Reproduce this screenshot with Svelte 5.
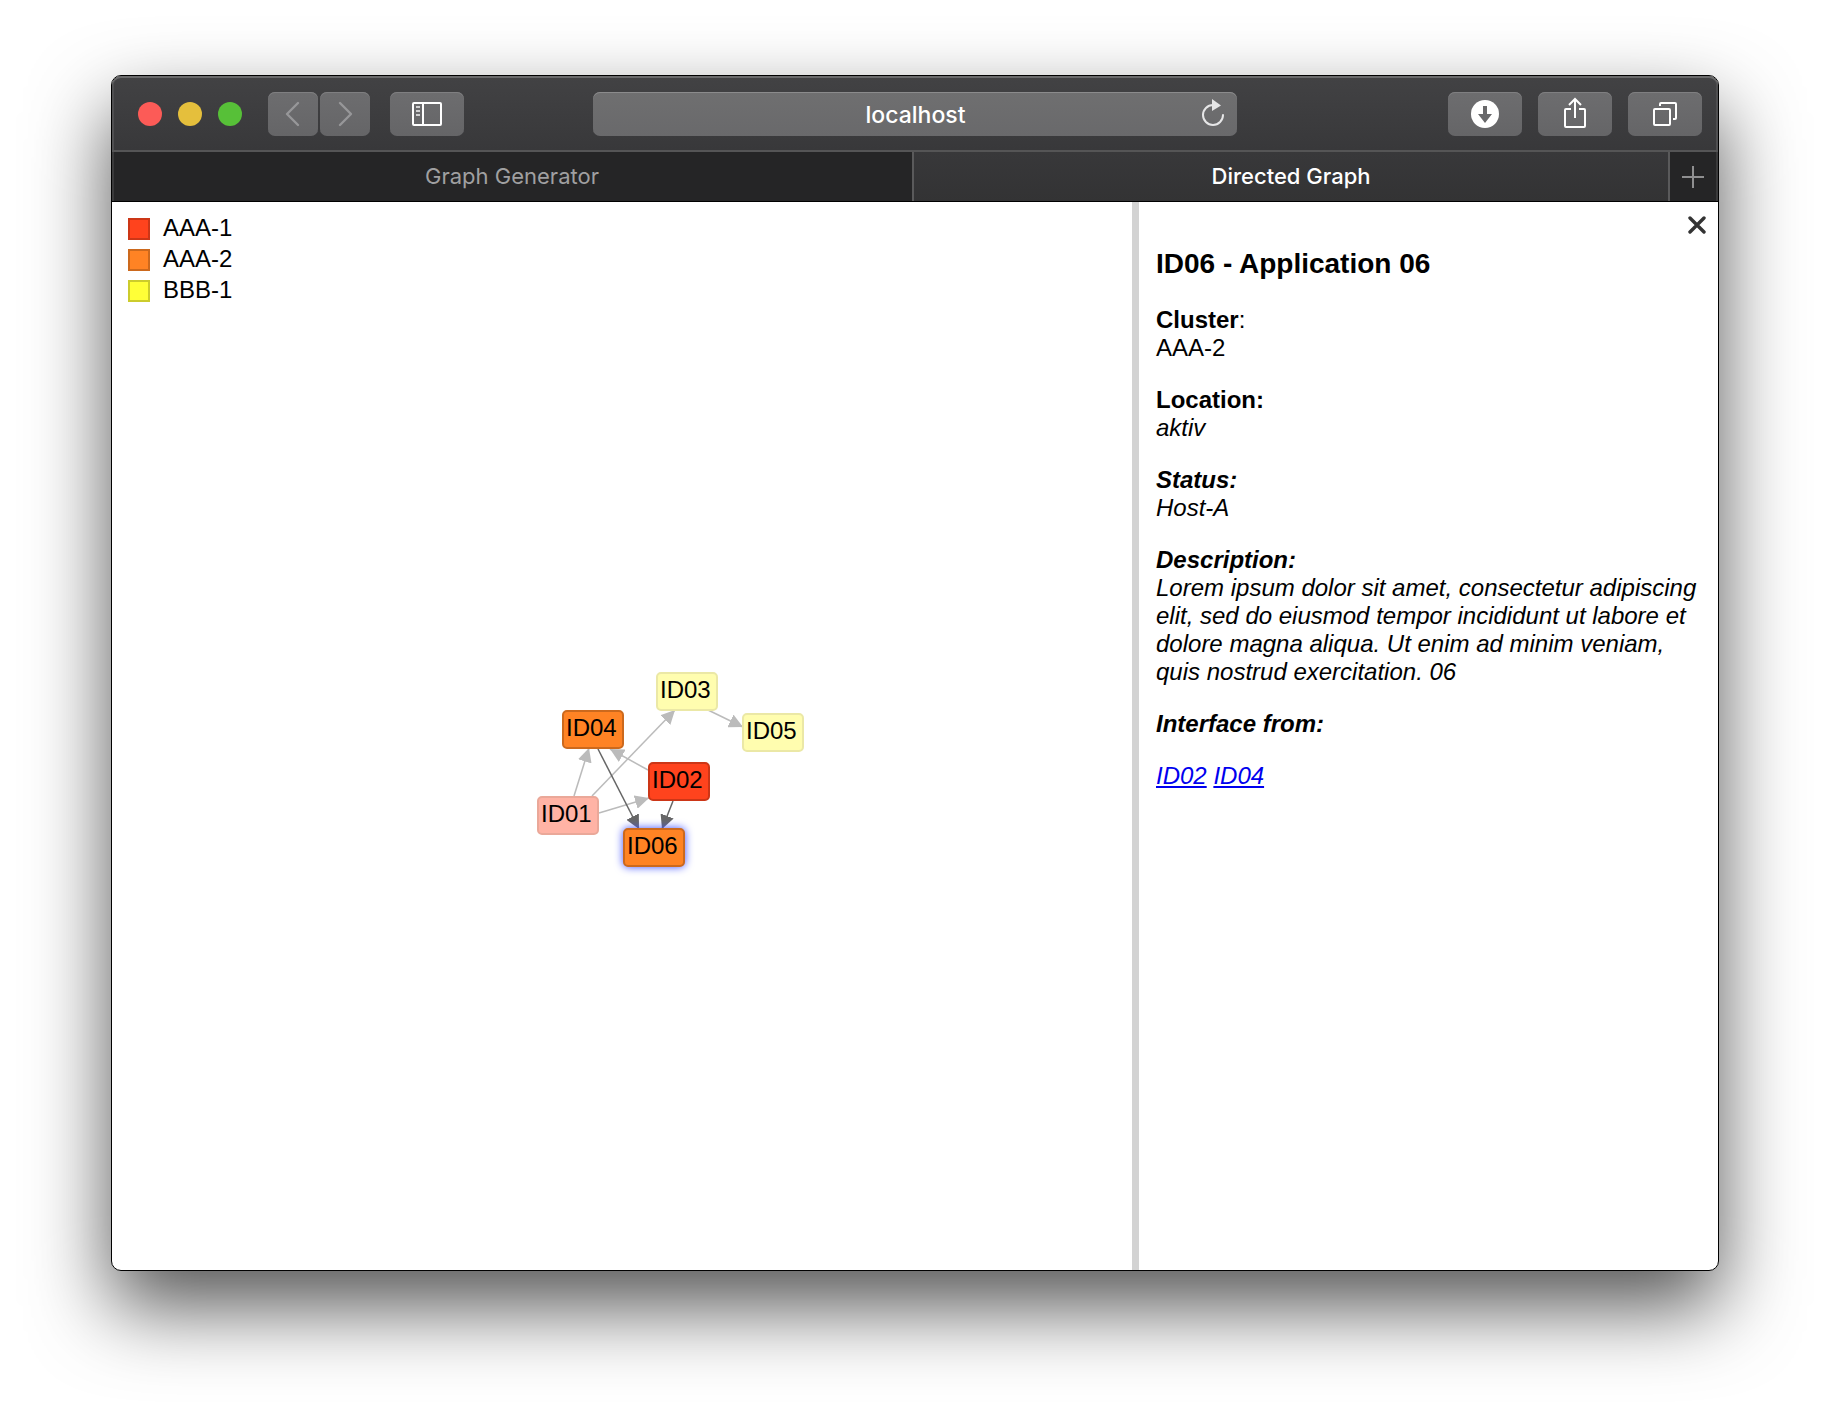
<script>
  const legend = [
    { name: 'AAA-1', tone: 'red' },
    { name: 'AAA-2', tone: 'orange' },
    { name: 'BBB-1', tone: 'yellow' }
  ];

  const nodes = [
    { id: 'ID01', x: 425, y: 594, tone: 'red', faded: true },
    { id: 'ID02', x: 536, y: 560, tone: 'red' },
    { id: 'ID03', x: 544, y: 470, tone: 'yellow', faded: true },
    { id: 'ID04', x: 450, y: 508, tone: 'orange' },
    { id: 'ID05', x: 630, y: 511, tone: 'yellow', faded: true },
    { id: 'ID06', x: 511, y: 626, tone: 'orange', selected: true }
  ];

  const edges = [
    { d: 'M462 594L477 546' },
    { d: 'M480 594L563 508' },
    { d: 'M596 508L631 525' },
    { d: 'M536 568L498 547' },
    { d: 'M487 611L537 596' },
    { d: 'M486 547L527 627', active: true },
    { d: 'M561 599L550 627', active: true }
  ];

  const links = ['ID02', 'ID04'];
  let address = $state('localhost');
</script>

<div class="desktop">
  <div class="window">
    <header class="chrome">
      <div class="toolbar">
        <div class="side">
          <div class="lights">
            <button class="light close" aria-label="Close window"></button>
            <button class="light minimise" aria-label="Minimise window"></button>
            <button class="light expand" aria-label="Expand window"></button>
          </div>
          <div class="history">
            <button class="tool small" aria-label="Back">
              <svg width="50" height="44" viewBox="0 0 50 44"><path d="M30 11L19 22L30 33" fill="none" stroke="#979799" stroke-width="2.4" stroke-linecap="round" stroke-linejoin="round" /></svg>
            </button>
            <button class="tool small" aria-label="Forward">
              <svg width="50" height="44" viewBox="0 0 50 44"><path d="M20 11L31 22L20 33" fill="none" stroke="#979799" stroke-width="2.4" stroke-linecap="round" stroke-linejoin="round" /></svg>
            </button>
          </div>
          <button class="tool" aria-label="Show sidebar">
            <svg width="74" height="44" viewBox="0 0 74 44" fill="none" stroke="#fff" stroke-width="2">
              <rect x="23" y="11" width="28" height="22" rx="1" />
              <path d="M33 11V33" />
              <path d="M26 15H30M26 19H30M26 23H30" stroke="#d0d0d1" />
            </svg>
          </button>
        </div>
        <div class="address">
          <input type="text" aria-label="Address" bind:value={address} />
          <button class="reload" aria-label="Reload">
            <svg width="24" height="36" viewBox="0 0 24 36">
              <path d="M12 9A10 10 0 1 0 22 19" fill="none" stroke="#e6e6e7" stroke-width="2" stroke-linecap="round" />
              <path d="M11 3L20 9.500L11 15Z" fill="#e6e6e7" />
            </svg>
          </button>
        </div>
        <div class="side end">
          <button class="tool" aria-label="Downloads">
            <svg width="74" height="44" viewBox="0 0 74 44">
              <circle cx="37" cy="22" r="14" fill="#fff" />
              <path d="M35 14H39V22H44L37 31L30 22H35Z" fill="#68686a" />
            </svg>
          </button>
          <button class="tool" aria-label="Share">
            <svg width="74" height="44" viewBox="0 0 74 44" fill="none" stroke="#fff" stroke-width="2">
              <path d="M33 17H28Q27 17 27 18V34Q27 35 28 35H46Q47 35 47 34V18Q47 17 46 17H41" />
              <path d="M37 26V8M31 13L37 7L43 13" />
            </svg>
          </button>
          <button class="tool" aria-label="Show all tabs">
            <svg width="74" height="44" viewBox="0 0 74 44" fill="none" stroke="#fff" stroke-width="2">
              <rect x="26" y="17" width="16" height="16" rx="1" />
              <path d="M32 14V12Q32 11 33 11H47Q48 11 48 12V26Q48 27 47 27H45" />
            </svg>
          </button>
        </div>
      </div>
      <nav class="tabs" aria-label="Tabs">
        <button class="tab">Graph Generator</button>
        <button class="tab current" aria-current="page">Directed Graph</button>
        <button class="add" aria-label="New tab">
          <svg width="22" height="22" viewBox="0 0 22 22"><path d="M11 0V22M0 11H22" stroke="#8f8f90" stroke-width="2" /></svg>
        </button>
      </nav>
    </header>

    <div class="page">
      <main>
        <svg class="graph" viewBox="0 0 1020 1068" role="group" aria-label="Directed graph">
          <defs>
            <marker id="arrow" viewBox="0 0 14 14" refX="14" refY="7" markerWidth="14" markerHeight="14" markerUnits="userSpaceOnUse" orient="auto">
              <path d="M0 0L14 7L0 14Z" fill="#bbb" />
            </marker>
            <marker id="arrow-active" viewBox="0 0 14 14" refX="14" refY="7" markerWidth="14" markerHeight="14" markerUnits="userSpaceOnUse" orient="auto">
              <path d="M0 0L14 7L0 14Z" fill="#666" />
            </marker>
          </defs>
          {#each edges as edge}
            <path class="edge" class:active={edge.active} d={edge.d} marker-end={edge.active ? 'url(#arrow-active)' : 'url(#arrow)'} />
          {/each}
          {#each nodes as node}
            <g transform="translate({node.x} {node.y})">
              <rect class="node {node.tone}" class:faded={node.faded} class:selected={node.selected} x="1" y="1" width="60" height="37" rx="4" />
              <text x="4" y="26">{node.id}</text>
            </g>
          {/each}
        </svg>
        <ul class="legend">
          {#each legend as item}
            <li><span class="swatch {item.tone}"></span>{item.name}</li>
          {/each}
        </ul>
      </main>

      <aside>
        <button class="dismiss" aria-label="Close details">
          <svg width="18" height="18" viewBox="0 0 18 18"><path d="M2 2L16 16M16 2L2 16" stroke="#333" stroke-width="3.400" stroke-linecap="round" /></svg>
        </button>
        <h1>ID06 - Application 06</h1>
        <p><b>Cluster</b>:<br />AAA-2</p>
        <p><b>Location:</b><br /><i>aktiv</i></p>
        <p class="slanted"><b>Status:</b><br />Host-A</p>
        <p class="slanted"><b>Description:</b><br />Lorem ipsum dolor sit amet, consectetur adipiscing elit, sed do eiusmod tempor incididunt ut labore et dolore magna aliqua. Ut enim ad minim veniam, quis nostrud exercitation. 06</p>
        <p class="slanted"><b>Interface from:</b></p>
        <p class="slanted">
          {#each links as link, i}{#if i}{' '}{/if}<a href="#{link}">{link}</a>{/each}
        </p>
      </aside>
    </div>
  </div>
</div>

<style>
  :global(body) {
    background: #fff;
  }

  .desktop {
    box-sizing: border-box;
    display: flex;
    min-height: 100vh;
    padding: 75px 111px 147px;
    overflow: hidden;
    font-family: 'Liberation Sans', Arial, sans-serif;
    font-size: 24px;
    line-height: 28px;
    color: #000;
  }

  .window {
    flex: 1;
    display: flex;
    flex-direction: column;
    min-width: 0;
    overflow: hidden;
    border: 1px solid #000;
    border-radius: 10px;
    background: #fff;
    box-shadow: 0 36px 80px rgba(0, 0, 0, 0.67);
  }

  button {
    padding: 0;
    border: 0;
    background: none;
    font: inherit;
    color: inherit;
  }

  svg {
    display: block;
  }

  .chrome {
    border-bottom: 1px solid #000;
    border-radius: 9px 9px 0 0;
    background: #252526;
    font-family: Inter, Roboto, sans-serif;
    color: #fff;
  }

  .toolbar {
    display: grid;
    grid-template-columns: 1fr minmax(0, 644px) 1fr;
    align-items: center;
    padding: 16px 16px 14px 26px;
    border-bottom: 2px solid #555556;
    border-radius: 9px 9px 0 0;
    background: linear-gradient(#424244, #38383a);
    box-shadow: inset 0 2px #6a6a6b, inset 2px 0 #4f4f51, inset -2px 0 #4f4f51;
  }

  .side {
    display: flex;
    gap: 20px;
  }

  .side.end {
    justify-content: flex-end;
    gap: 16px;
  }

  .lights {
    display: flex;
    align-items: center;
    gap: 16px;
    margin-right: 6px;
  }

  .light {
    width: 24px;
    height: 24px;
    border-radius: 50%;
  }

  .light.close {
    background: #fc5b57;
  }

  .light.minimise {
    background: #e5bf3c;
  }

  .light.expand {
    background: #57c038;
  }

  .history {
    display: flex;
    gap: 2px;
  }

  .tool {
    width: 74px;
    height: 44px;
    border-radius: 7px;
    background: linear-gradient(#6d6d6f, #656567);
    box-shadow: inset 0 1px #7f7f81;
  }

  .tool.small {
    width: 50px;
  }

  .address {
    display: flex;
    align-items: center;
    height: 44px;
    margin: 0 5px 0 -5px;
    border-radius: 7px;
    background: linear-gradient(#6f6f70, #69696b);
    box-shadow: inset 0 1px #8b8b8c;
  }

  .address input {
    flex: 1;
    box-sizing: border-box;
    min-width: 0;
    height: 44px;
    padding: 1px 0 0 37px;
    border: 0;
    background: none;
    font: 500 23px/28px Inter, Roboto, sans-serif;
    text-align: center;
    color: #fff;
  }

  .reload {
    margin-right: 12px;
  }

  .tabs {
    display: grid;
    grid-template-columns: calc(50% - 1px) 1fr 48px;
    height: 49px;
    box-shadow: inset 2px 0 #3a3a3b, inset -2px 0 #3a3a3b;
  }

  .tab {
    padding-bottom: 2px;
    border-right: 2px solid #5a5a5b;
    font-size: 22px;
    color: #a0a0a1;
  }

  .tab.current {
    background: linear-gradient(#38383a, #333334);
    font-weight: 500;
    color: #fff;
  }

  .add {
    display: grid;
    place-items: center;
    padding-right: 2px;
  }

  .page {
    flex: 1;
    display: flex;
    min-height: 0;
  }

  main {
    position: relative;
    flex: 1;
    min-width: 0;
    padding: 10px 16px;
  }

  .graph {
    position: absolute;
    inset: 0;
    width: 100%;
    height: 100%;
  }

  .edge {
    fill: none;
    stroke: #bbb;
    stroke-width: 1.5px;
  }

  .edge.active {
    stroke: #666;
  }

  .node {
    stroke-width: 2px;
  }

  .node.red {
    fill: #ff431d;
    stroke: #cc3617;
  }

  .node.orange {
    fill: #ff8324;
    stroke: #cc691d;
  }

  .node.yellow {
    fill: #ffff37;
    stroke: #cccc2c;
  }

  .node.red.faded {
    fill: #ffb3a5;
    stroke: #eaa899;
  }

  .node.yellow.faded {
    fill: #fffdaf;
    stroke: #ebe8a6;
  }

  .node.selected {
    filter: drop-shadow(0 0 4px #4050ff);
  }

  .legend {
    position: relative;
    margin: 0;
    padding: 0;
    list-style: none;
  }

  .legend li {
    display: flex;
    align-items: center;
    gap: 13px;
    height: 31px;
  }

  .swatch {
    box-sizing: border-box;
    width: 22px;
    height: 22px;
    margin-top: 2px;
    border: 2px solid;
  }

  .swatch.red {
    border-color: #cc3617;
    background: #ff431d;
  }

  .swatch.orange {
    border-color: #cc691d;
    background: #ff8324;
  }

  .swatch.yellow {
    border-color: #cccc2c;
    background: #ffff37;
  }

  aside {
    position: relative;
    box-sizing: border-box;
    flex: 0 1 586px;
    padding: 46px 16px 24px 17px;
    border-left: 7px solid #d3d3d3;
  }

  .dismiss {
    position: absolute;
    top: 14px;
    right: 12px;
  }

  h1 {
    margin: 0 0 26px;
    font-size: 28px;
    line-height: 32px;
  }

  p {
    margin: 0 0 24px;
  }

  .slanted {
    font-style: italic;
  }

  a {
    color: #0000ee;
  }
</style>
